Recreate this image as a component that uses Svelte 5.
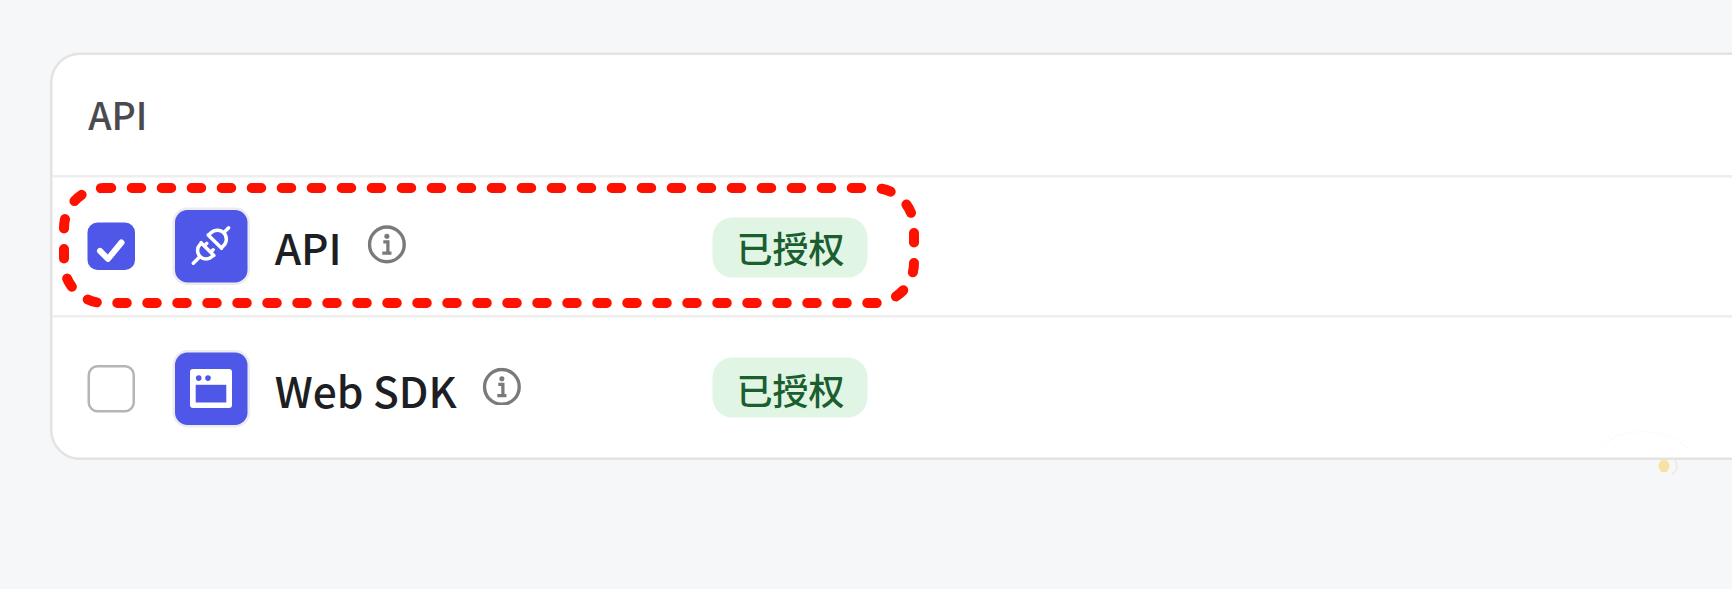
<script>
  const rows = [
    { name: 'API', checked: true, icon: 'plug' },
    { name: 'Web SDK', checked: false, icon: 'browser' }
  ];
</script>

<div class="page" lang="zh-CN">
  <div class="stage">
    <section class="card">
      <header class="head">API</header>
      {#each rows as row}
        <div class="row">
          <span class="check" class:on={row.checked}>
            {#if row.checked}
              <svg viewBox="0 0 48 48"><path d="M12.5 28.5 20.5 36.5 34 20" fill="none" stroke="#fff" stroke-width="6" stroke-linecap="round" stroke-linejoin="round"/></svg>
            {/if}
          </span>
          <span class="tile">
            {#if row.icon === 'plug'}
              <svg viewBox="0 0 72 72">
                <g transform="translate(36 35.5) rotate(-45)" fill="none" stroke="#fff" stroke-width="3.5" stroke-linecap="round" stroke-linejoin="round">
                  <path d="M5.5-9.5V9.5M5.5-9H9A9 9 0 0 1 9 9H5.5M18 0H25"/>
                  <path d="M-5-9V9M-5-8.5H-7A8.5 8.5 0 0 0-7 8.5H-5M-5-4.5H-1.5M-5 4.5H-1.5M-15.5 0H-25"/>
                </g>
              </svg>
            {:else}
              <svg viewBox="0 0 72 72">
                <rect x="15" y="16.6" width="42" height="39" rx="3" fill="#fff"/>
                <rect x="20.7" y="32.3" width="30.6" height="17.7" fill="#4f57e8"/>
                <circle cx="23.7" cy="25.6" r="2.8" fill="#4f57e8"/>
                <circle cx="33" cy="25.6" r="2.8" fill="#4f57e8"/>
              </svg>
            {/if}
          </span>
          <span class="name">
            <span>{row.name}</span>
            <svg class="info" viewBox="0 0 38 38" fill="none">
              <circle cx="19" cy="19" r="17" stroke="#7a7a7a" stroke-width="3.3"/>
              <circle cx="19" cy="11" r="2.5" fill="#7a7a7a"/>
              <path d="M15.5 16.5H20V27M14.5 27.5H23.5" stroke="#7a7a7a" stroke-width="3.2"/>
            </svg>
          </span>
          <span class="badge">已授权</span>
        </div>
      {/each}
    </section>
  </div>

  <svg class="overlay" viewBox="0 0 1732 589" fill="none">
    <rect x="64" y="188" width="850" height="115" rx="40" stroke="#ff1100" stroke-width="10" stroke-linecap="round" stroke-dasharray="9.5 20.5" stroke-dashoffset="2.3"/>
    <path d="M1598 448A70 70 0 0 1 1688 448" stroke="#ececec" stroke-width="1" stroke-dasharray="1 3"/>
    <path d="M1583 464A70 70 0 1 0 1703 464" stroke="#fff" stroke-width="1" stroke-dasharray="1 3"/>
    <ellipse cx="1664" cy="466" rx="5.5" ry="6.5" fill="#f6e3a4"/>
    <path d="M1672 458A9 9 0 0 1 1672 474" stroke="#f8e4e0" stroke-width="1.5"/>
  </svg>
</div>

<style>
  :global(body) {
    margin: 0;
    background: #f6f7f9;
  }
  .page {
    position: relative;
    width: 1732px;
    height: 589px;
    overflow: hidden;
    font-family: "Noto Sans CJK SC", "Noto Sans", sans-serif;
  }
  .stage {
    width: 692.8px;
    height: 235.6px;
    padding: 20.8px 0 0 20px;
    box-sizing: border-box;
    transform: scale(2.5);
    transform-origin: 0 0;
  }
  .card {
    width: 760px;
    background: #fff;
    border: 1px solid #e3e3e5;
    border-radius: 12px;
  }
  .head {
    height: 47.6px;
    padding-top: 0.4px;
    display: flex;
    align-items: center;
    padding-left: 14.3px;
    font-size: 15px;
    font-weight: 500;
    color: #4a4a50;
  }
  .row {
    height: 54.8px;
    padding-top: 0.6px;
    border-top: 1px solid #eeeeee;
    display: flex;
    align-items: center;
    padding-left: 13.6px;
  }
  .check {
    width: 19.2px;
    height: 19.2px;
    box-sizing: border-box;
    border: 1px solid #b5b5b5;
    border-radius: 4px;
    flex: none;
  }
  .check.on {
    background: #4f57e8;
    border: 0;
  }
  .check svg, .tile svg {
    display: block;
    width: 100%;
    height: 100%;
  }
  .tile {
    margin-left: 16.2px;
    width: 28.8px;
    height: 28.8px;
    flex: none;
    background: #4f57e8;
    border-radius: 5px;
    box-shadow: 0 0 0 1px #ececee;
  }
  .name {
    margin-left: 11.1px;
    width: 175.2px;
    flex: none;
    display: flex;
    align-items: center;
    gap: 10.4px;
    font-size: 17px;
    font-weight: 500;
    color: #1d1f24;
  }
  .info {
    width: 15.5px;
    height: 15.5px;
    margin-top: -1.6px;
  }
  .badge {
    height: 24px;
    display: flex;
    align-items: center;
    padding: 0 9.6px;
    border-radius: 8px;
    background: #e1f5e4;
    color: #1b5e2f;
    font-size: 14.4px;
    font-weight: 500;
  }
  .overlay {
    position: absolute;
    inset: 0;
    width: 1732px;
    height: 589px;
    pointer-events: none;
  }
</style>
